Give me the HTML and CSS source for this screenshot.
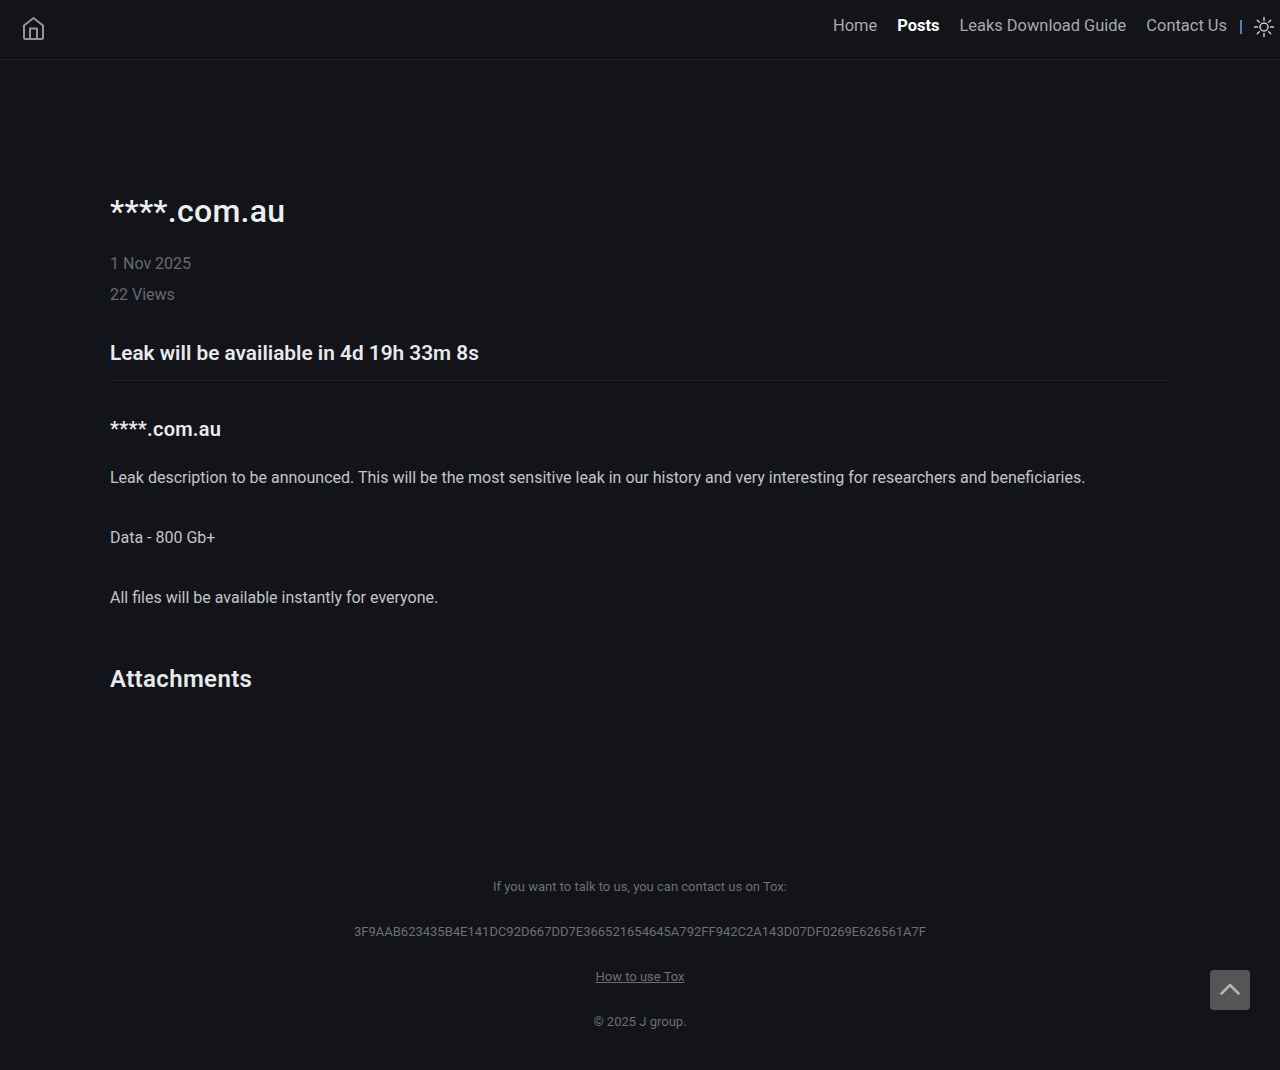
FILE: index.html
```html
<!DOCTYPE html>
<html lang="en">
<head>
<meta charset="utf-8">
<title>****.com.au</title>
<link rel="stylesheet" href="styles.css">
</head>
<body>
<header class="site-header">
  <a class="home-link" href="#" aria-label="Home">
    <svg class="home-icon" width="24" height="24" viewBox="0 0 24 24" fill="none" stroke="currentColor" stroke-width="2" stroke-linejoin="round" stroke-linecap="round"><path d="M2 8.500 11.500 1 21 8.500V20.500a1.500 1.500 0 0 1-1.500 1.500H3.500a1.500 1.500 0 0 1-1.500-1.500Z"/><path d="M8 22V11.500h7V22"/></svg>
  </a>
  <nav class="site-nav">
    <a href="#">Home</a>
    <a href="#" class="active">Posts</a>
    <a href="#">Leaks Download Guide</a>
    <a href="#">Contact Us</a>
    <span class="nav-sep"></span>
    <svg class="sun-icon" width="22" height="22" viewBox="0 0 22 22" fill="none" stroke="currentColor" stroke-width="1.500" stroke-linecap="round"><circle cx="11" cy="11" r="4"/><path d="M11 1.500v3M11 17.500v3M1.500 11h3M17.500 11h3M4.300 4.300l2 2M15.700 15.700l2 2M4.300 17.700l2-2M15.700 6.300l2-2"/></svg>
  </nav>
</header>
<main class="post">
  <h1 class="post-title">****.com.au</h1>
  <p class="meta meta-date">1 Nov 2025</p>
  <p class="meta">22 Views</p>
  <h3 class="countdown">Leak will be availiable in 4d 19h 33m 8s</h3>
  <hr class="rule">
  <h4 class="leak-name">****.com.au</h4>
  <p class="body-text">Leak description to be announced. This will be the most sensitive leak in our history and very interesting for researchers and beneficiaries.</p>
  <p class="body-text">Data - 800 Gb+</p>
  <p class="body-text">All files will be available instantly for everyone.</p>
  <h2 class="attachments">Attachments</h2>
</main>
<footer class="site-footer">
  <p>If you want to talk to us, you can contact us on Tox:</p>
  <p>3F9AAB623435B4E141DC92D667DD7E366521654645A792FF942C2A143D07DF0269E626561A7F</p>
  <p><a href="#">How to use Tox</a></p>
  <p>© 2025 J group.</p>
</footer>
<a class="to-top" href="#" aria-label="Back to top">
  <svg class="to-top-icon" width="20" height="12" viewBox="0 0 20 12" fill="none" stroke="currentColor" stroke-width="2.500" stroke-linecap="round" stroke-linejoin="round"><path d="M1.500 10.500 10 2l8.500 8.500"/></svg>
</a>
</body>
</html>
```
FILE: styles.css
```css
* { box-sizing: border-box; }
html, body { margin: 0; padding: 0; }
body {
  position: relative;
  height: 1070px;
  overflow: hidden;
  background: #121419;
  color: #dadadb;
  font-family: Roboto, "Liberation Sans", sans-serif;
  font-size: 16px;
  line-height: 24px;
}
a { color: inherit; text-decoration: none; }
p, h1, h2, h3, h4 { margin: 0; }
.site-header {
  height: 60px;
  border-bottom: 1px solid #1f2126;
  display: flex;
  justify-content: space-between;
  align-items: flex-start;
  padding: 0 5px 0 22px;
}
.home-link { display: block; margin-top: 17px; color: #939497; }
.home-icon { display: block; }
.site-nav {
  display: flex;
  align-items: center;
  height: 52px;
  gap: 20px;
  color: #a8a9ac;
  line-height: 50px;
  font-size: 16.450px;
}
.site-nav .active { color: #fff; font-weight: 700; }
.nav-sep { width: 2px; height: 14px; background: #4c84b8; margin: 2px -9px 0 -7px; }
.sun-icon { margin-top: 1px; color: #c9c9cb; }
.post { padding: 131px 110px 0; }
.post-title { font-size: 32px; line-height: 40px; font-weight: 500; letter-spacing: 0.27px; color: #edeeef; }
.meta { color: #686a6f; line-height: 31px; }
.meta-date { margin-top: 17px; }
.countdown { margin-top: 29px; font-size: 20.800px; line-height: 28px; font-weight: 600; color: #e8e9ea; }
.rule { margin: 13px 0 0; border: 0; border-top: 1px solid #1f2126; }
.leak-name { margin-top: 34px; font-size: 20px; line-height: 28px; font-weight: 600; letter-spacing: 0.27px; color: #e8e9ea; }
.body-text { margin-top: 36px; color: #c3c4c6; }
.leak-name + .body-text { margin-top: 23px; }
.attachments { margin-top: 53px; font-size: 24px; line-height: 32px; font-weight: 600; letter-spacing: 0.36px; color: #e8e9ea; }
.site-footer {
  margin-top: 182px;
  text-align: center;
  font-size: 13px;
  line-height: 20px;
  color: #6d6f74;
}
.site-footer p + p { margin-top: 25px; }
.site-footer a { text-decoration: underline; }
.to-top {
  position: absolute;
  right: 30px;
  top: 970px;
  width: 40px;
  height: 40px;
  border-radius: 4px;
  background: #545557;
  color: #b5b5b7;
  display: flex;
  align-items: center;
  justify-content: center;
}
.to-top-icon { margin-top: -2px; }
```
